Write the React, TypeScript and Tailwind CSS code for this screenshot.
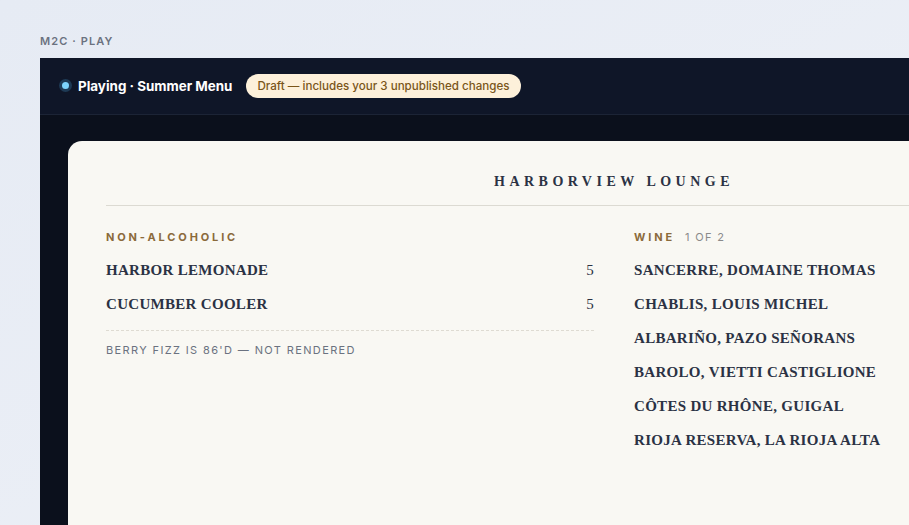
import React from "react";

const serif = { fontFamily: '"Liberation Serif", "DejaVu Serif", serif' };

const nonAlcoholic = [
  { name: "Harbor Lemonade", price: "5" },
  { name: "Cucumber Cooler", price: "5" },
];

const wines = [
  "Sancerre, Domaine Thomas",
  "Chablis, Louis Michel",
  "Albariño, Pazo Señorans",
  "Barolo, Vietti Castiglione",
  "Côtes du Rhône, Guigal",
  "Rioja Reserva, La Rioja Alta",
];

const App: React.FC = () => {
  return (
    <div className="h-screen w-full overflow-hidden bg-gradient-to-br from-[#e6ebf4] to-[#eef1f7] font-['Inter',sans-serif]">
      <div className="pl-10 pt-[34px]">
        {/* label */}
        <div className="text-[11px] font-semibold tracking-[0.1em] text-[#6b7280] leading-[14px]">
          M2C · PLAY
        </div>

        {/* player frame */}
        <div className="mt-[10px] w-[1150px] bg-[#0b101c]">
          {/* header */}
          <div className="flex h-[57px] items-center gap-[14px] border-b border-[#1c2436] bg-[#0f1628] pl-[19px]">
            <div className="flex items-center gap-[6px]">
              <span className="flex h-[13px] w-[13px] items-center justify-center rounded-full bg-[#1e3a55]">
                <span className="h-[7px] w-[7px] rounded-full bg-[#7dd3fc]" />
              </span>
              <span className="text-[13.4px] font-bold text-white">Playing · Summer Menu</span>
            </div>
            <span className="rounded-full bg-[#fdf0da] px-[11px] py-[4px] text-[11.6px] font-medium leading-[16px] text-[#7a5519]">
              Draft — includes your 3 unpublished changes
            </span>
          </div>

          {/* stage */}
          <div className="pl-[28px] pt-[26px]">
            <div className="h-[400px] w-[1092px] rounded-t-[14px] bg-[#f9f8f3] px-[38px] pt-[32px]">
              <div
                style={serif}
                className="text-center text-[14px] font-bold tracking-[0.32em] text-[#2b3244] leading-[18px]"
              >
                HARBORVIEW LOUNGE
              </div>
              <div className="mt-[14px] h-px bg-[#dcdad2]" />

              <div className="mt-[24px] grid grid-cols-2 gap-10">
                {/* left column */}
                <div>
                  <div className="text-[11px] font-bold tracking-[0.26em] text-[#8b6a3b] leading-[14px]">
                    NON-ALCOHOLIC
                  </div>
                  <div className="mt-[9px]">
                    {nonAlcoholic.map((item) => (
                      <div
                        key={item.name}
                        style={serif}
                        className="flex h-[34px] items-center justify-between text-[15px] font-bold uppercase tracking-[0.02em] text-[#2b3244]"
                      >
                        <span>{item.name}</span>
                        <span className="font-normal">{item.price}</span>
                      </div>
                    ))}
                  </div>
                  <div className="mt-[9px] border-t border-dashed border-[#dedbd2]" />
                  <div className="mt-[12px] text-[11px] tracking-[0.125em] text-[#6b7280] leading-[14px]">
                    BERRY FIZZ IS 86'D — NOT RENDERED
                  </div>
                </div>

                {/* right column */}
                <div>
                  <div className="flex items-baseline gap-[10px] leading-[14px]">
                    <span className="text-[11px] font-bold tracking-[0.26em] text-[#8b6a3b]">WINE</span>
                    <span className="text-[11px] tracking-[0.12em] text-[#8a8a8a]">1 OF 2</span>
                  </div>
                  <div className="mt-[9px]">
                    {wines.map((w) => (
                      <div
                        key={w}
                        style={serif}
                        className="flex h-[34px] items-center text-[15px] font-bold uppercase tracking-[0.02em] text-[#2b3244]"
                      >
                        {w}
                      </div>
                    ))}
                  </div>
                </div>
              </div>
            </div>
          </div>
        </div>
      </div>
    </div>
  );
};

export default App;
